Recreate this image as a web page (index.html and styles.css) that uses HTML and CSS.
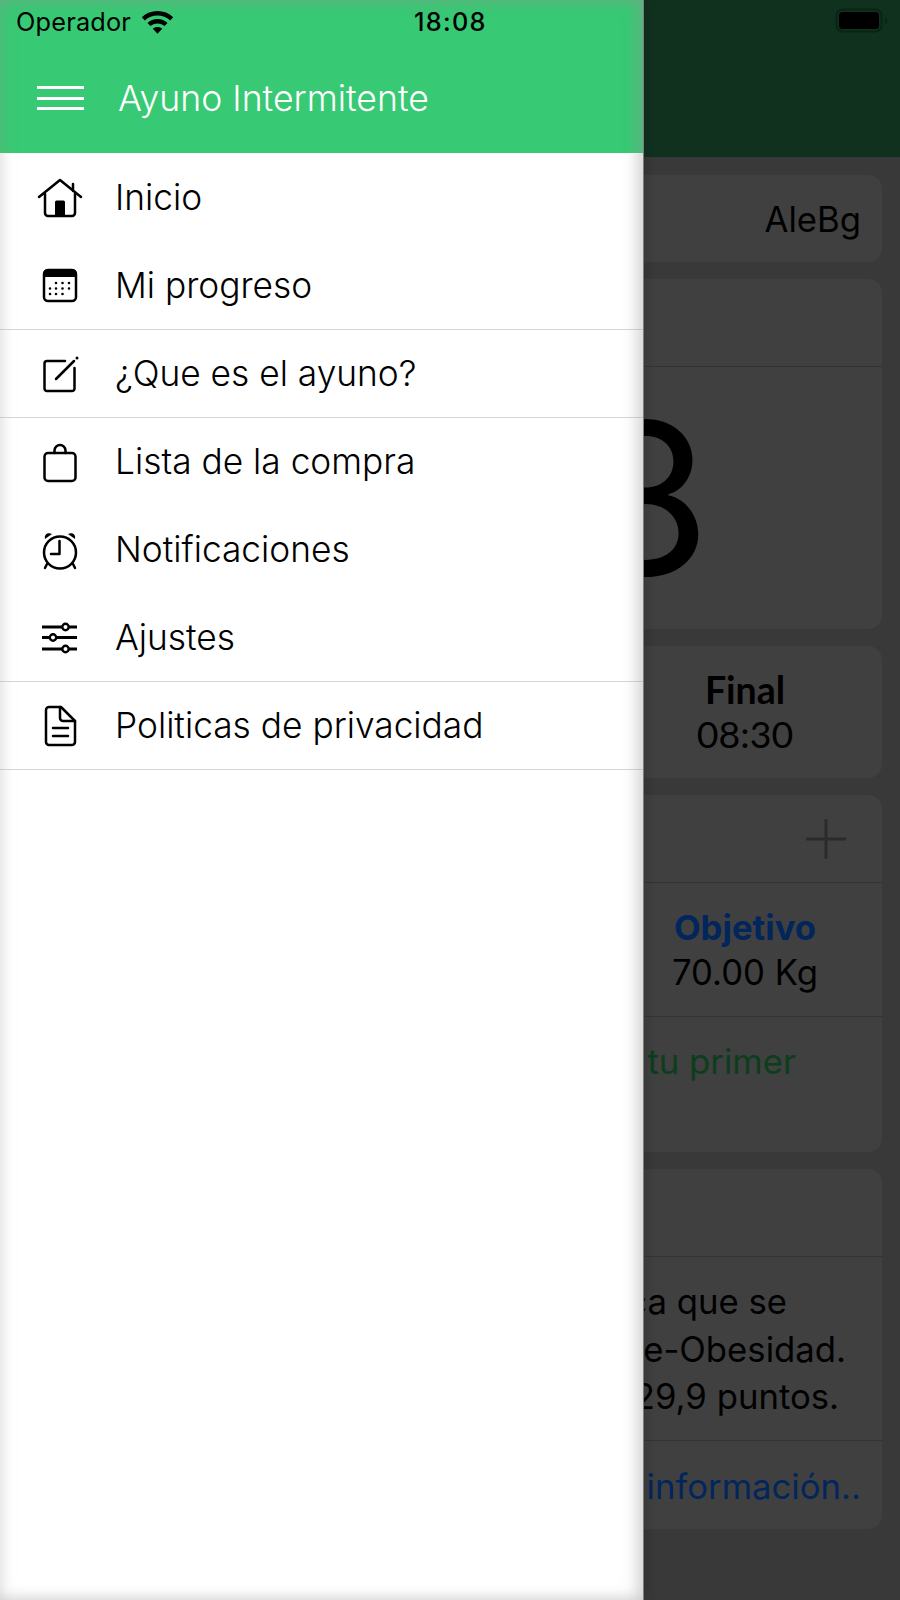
FILE: index.html

```html
<!DOCTYPE html>
<html lang="es">
<head>
  <meta charset="UTF-8" />
  <meta name="viewport" content="width=device-width, initial-scale=1.0"/>
  <title>Ayuno Intermitente</title>
  <link rel="stylesheet" href="styles.css">
</head>
<body>
  <div class="app">
    <header class="app-bar">
      <svg class="battery" width="54" height="26" viewBox="0 0 54 26">
        <rect x="1.500" y="1.500" width="45" height="22" rx="6" fill="none" stroke="#0a2414" stroke-width="2"/>
        <rect x="4" y="4" width="40" height="17" rx="3.500" fill="#000"/>
        <path d="M50 9c2 1 2.500 2.500 2.500 3.500S52 15 50 16z" fill="#0a2414"/>
      </svg>
    </header>
    <main class="content">
      <section class="card card-name"><span>AleBg</span></section>
      <section class="card card-fast">
        <div class="card-head"></div>
        <div class="fast-ratio">8</div>
      </section>
      <section class="card card-times">
        <div class="stat"><b>Final</b><span>08:30</span></div>
      </section>
      <section class="card card-weight">
        <div class="card-head">
          <svg class="plus" width="40" height="40" viewBox="0 0 40 40"><path d="M20 1v38M1 20h38" stroke="#2b2b2b" stroke-width="3" stroke-linecap="round"/></svg>
        </div>
        <div class="goal"><b>Objetivo</b><span>70.00 Kg</span></div>
        <div class="first-weight">Añade tu primer</div>
      </section>
      <section class="card card-bmi">
        <div class="card-head"></div>
        <div class="bmi-text">
          <span class="line-1">Tu índice indica que se</span>
          <span class="line-2">encuentra en Pre-Obesidad.</span>
          <span class="line-3">Un IMC entre 25 y 29,9 puntos.</span>
        </div>
        <div class="more">Más información..</div>
      </section>
    </main>
  </div>

  <aside class="drawer">
    <div class="drawer-top">
      <div class="status">
        <span class="carrier">Operador</span>
        <svg class="wifi" width="33" height="24" viewBox="0 0 33 24">
          <path d="M16.500 1C10.500 1 5 3.200 .8 7.200l3 3.200C7.200 7.200 11.600 5.400 16.500 5.400s9.300 1.800 12.700 5l3-3.200C28 3.200 22.500 1 16.500 1z"/>
          <path d="M16.500 9C12.700 9 9.200 10.400 6.500 12.900l3 3.200c1.900-1.700 4.300-2.700 7-2.700s5.100 1 7 2.700l3-3.200C23.800 10.400 20.300 9 16.500 9z"/>
          <path d="M16.500 17c-1.800 0-3.400.6-4.700 1.700l4.700 5 4.700-5c-1.300-1.100-2.900-1.700-4.700-1.700z"/>
        </svg>
        <span class="clock">18:08</span>
      </div>
      <div class="title-row">
        <span class="burger"><i></i><i></i><i></i></span>
        <h1>Ayuno Intermitente</h1>
      </div>
    </div>
    <nav class="menu">
      <a class="item">
        <svg viewBox="0 0 48 48"><path d="M3 23 24 6l21 17M37 10v7" class="line"/><path d="M9 20v19a3 3 0 0 0 3 3h24a3 3 0 0 0 3-3V20" class="line"/><path d="M19 42V28a1.500 1.500 0 0 1 1.500-1.500h7A1.500 1.500 0 0 1 29 28v14z" fill="#000"/></svg>
        Inicio
      </a>
      <a class="item last">
        <svg viewBox="0 0 48 48">
          <rect x="8" y="9" width="32" height="31" rx="4" class="line"/>
          <path d="M7 13a5 5 0 0 1 5-5h24a5 5 0 0 1 5 5v3H7z" fill="#000"/>
          <path d="M20 22h.01M26.500 22h.01M33 22h.01M14 27.500h.01M20 27.500h.01M26.500 27.500h.01M33 27.500h.01M14 33h.01M20 33h.01M26.500 33h.01" class="dots"/>
        </svg>
        Mi progreso
      </a>
      <a class="item last">
        <svg viewBox="0 0 48 48"><path d="M29 12H11a2.500 2.500 0 0 0-2.500 2.500v25A2.500 2.500 0 0 0 11 42h25a2.500 2.500 0 0 0 2.500-2.500V19" class="line"/><path d="M20 30 38 12" class="line"/><circle cx="41" cy="9" r="1.500"/></svg>
        ¿Que es el ayuno?
      </a>
      <a class="item">
        <svg viewBox="0 0 48 48"><rect x="8.500" y="15" width="31" height="28" rx="3.500" class="line"/><path d="M18.500 15v-2.500a5.500 5.500 0 0 1 11 0V15" class="line"/></svg>
        Lista de la compra
      </a>
      <a class="item">
        <svg viewBox="0 0 48 48"><circle cx="24" cy="26.500" r="16" class="line"/><path d="M23.500 15v13H15M11 38l-2 4M37 38l2 4" class="line"/><path d="M9 13C8 9 11 6 16 8zM39 13c1-4-2-7-7-5z" fill="#000"/></svg>
        Notificaciones
      </a>
      <a class="item last">
        <svg viewBox="0 0 48 48">
          <path d="M6 14h35M6 24.500h35M6 36h35" class="line line-flat"/>
          <circle cx="29.500" cy="14" r="3.200" class="knob"/><circle cx="17" cy="24.500" r="3.200" class="knob"/><circle cx="29.500" cy="36" r="3.200" class="knob"/>
        </svg>
        Ajustes
      </a>
      <a class="item last">
        <svg viewBox="0 0 48 48"><path d="M13 6h12l14 14v21a3 3 0 0 1-3 3H13a3 3 0 0 1-3-3V9a3 3 0 0 1 3-3z" class="line"/><path d="M24 6v11a3 3 0 0 0 3 3h12M17 27h15M17 35h15" class="line"/></svg>
        Politicas de privacidad
      </a>
    </nav>
  </aside>
</body>
</html>
```

FILE: styles.css

```css
* { box-sizing: border-box; }
body { margin: 0; width: 900px; height: 1600px; overflow: hidden; position: relative; background: #393939; font-family: Inter, "Liberation Sans", sans-serif; color: #000; }

.app-bar { height: 157px; background: #11311f; display: flex; justify-content: flex-end; align-items: flex-start; padding: 8px 11px 0 0; }
.content { display: flex; flex-direction: column; gap: 17px; padding: 18px 18px 0; }
.card { background: #404040; border-radius: 14px; font-size: 34.700px; }
.card-head { height: 88px; border-bottom: 1px solid #333; display: flex; justify-content: flex-end; align-items: center; padding-right: 36px; }

.card-name { height: 87px; display: flex; justify-content: flex-end; align-items: center; padding-right: 21px; }
.card-fast { height: 350px; }
.fast-ratio { font-size: 212px; font-weight: 380; line-height: 262px; text-align: right; padding-right: 171px; }
.card-times { height: 132px; display: flex; justify-content: flex-end; }
.stat { width: 274px; display: flex; flex-direction: column; align-items: center; font-family: Lato, sans-serif; font-size: 37.500px; line-height: 44px; padding-top: 22px; }
.card-weight { height: 357px; }
.goal { height: 133px; width: 274px; margin-left: auto; display: flex; flex-direction: column; align-items: center; line-height: 45px; padding-top: 22px; }
.goal b { color: #02265c; font-weight: 700; }
.first-weight { border-top: 1px solid #333; height: 135px; text-align: right; padding: 20px 86px 0 0; color: #0d3d1d; line-height: 48px; }
.card-bmi { height: 360px; }
.bmi-text { height: 184px; padding-top: 21px; display: flex; flex-direction: column; align-items: flex-end; line-height: 47.500px; border-bottom: 1px solid #333; white-space: nowrap; }
.line-1 { margin-right: 95px; }
.line-2 { margin-right: 36px; }
.line-3 { margin-right: 43px; }
.more { color: #02265c; text-align: right; padding: 21px 21px 0 0; line-height: 48px; }

.drawer { position: absolute; left: 0; top: 0; width: 643px; height: 1600px; background: #fff; box-shadow: 1px 0 0 #7d7d7d, 6px 0 8px rgba(0,0,0,.1); }
.drawer::after { content: ""; position: absolute; inset: 0; box-shadow: inset 0 0 16px rgba(150,150,150,.38), inset -8px 0 14px rgba(150,150,150,.22); pointer-events: none; }
.drawer-top { height: 153px; background: #38c974; }
.status { height: 46px; display: flex; align-items: center; padding: 0 0 3px 16px; font-size: 25.300px; }
.carrier { width: 125px; letter-spacing: .2px; }
.wifi { margin-top: 1px; }
.clock { margin-left: 240px; font-weight: 500; letter-spacing: 1.300px; }
.title-row { height: 107px; display: flex; align-items: center; padding: 0 0 3px 37px; color: #fff; }
.burger { width: 47px; display: flex; flex-direction: column; gap: 7.500px; margin-right: 34px; }
.burger i { display: block; height: 3px; background: #fff; }
.title-row h1 { margin: 0; font-size: 35.600px; font-weight: 300; }

.menu { padding-top: 1px; }
.item { height: 88px; display: flex; align-items: center; padding: 0 0 1px 36px; font-size: 35.300px; font-weight: 350; gap: 31px; }
.item.last { border-bottom: 1px solid #d6d6d6; }
.item svg { width: 48px; height: 48px; flex: none; }
.line { fill: none; stroke: #000; stroke-width: 2.500; stroke-linecap: round; stroke-linejoin: round; }
.line-flat { stroke-linecap: butt; stroke-width: 2.800; }
.dots { fill: none; stroke: #000; stroke-width: 2.600; stroke-linecap: round; }
.knob { fill: #fff; stroke: #000; stroke-width: 2.400; }
```
